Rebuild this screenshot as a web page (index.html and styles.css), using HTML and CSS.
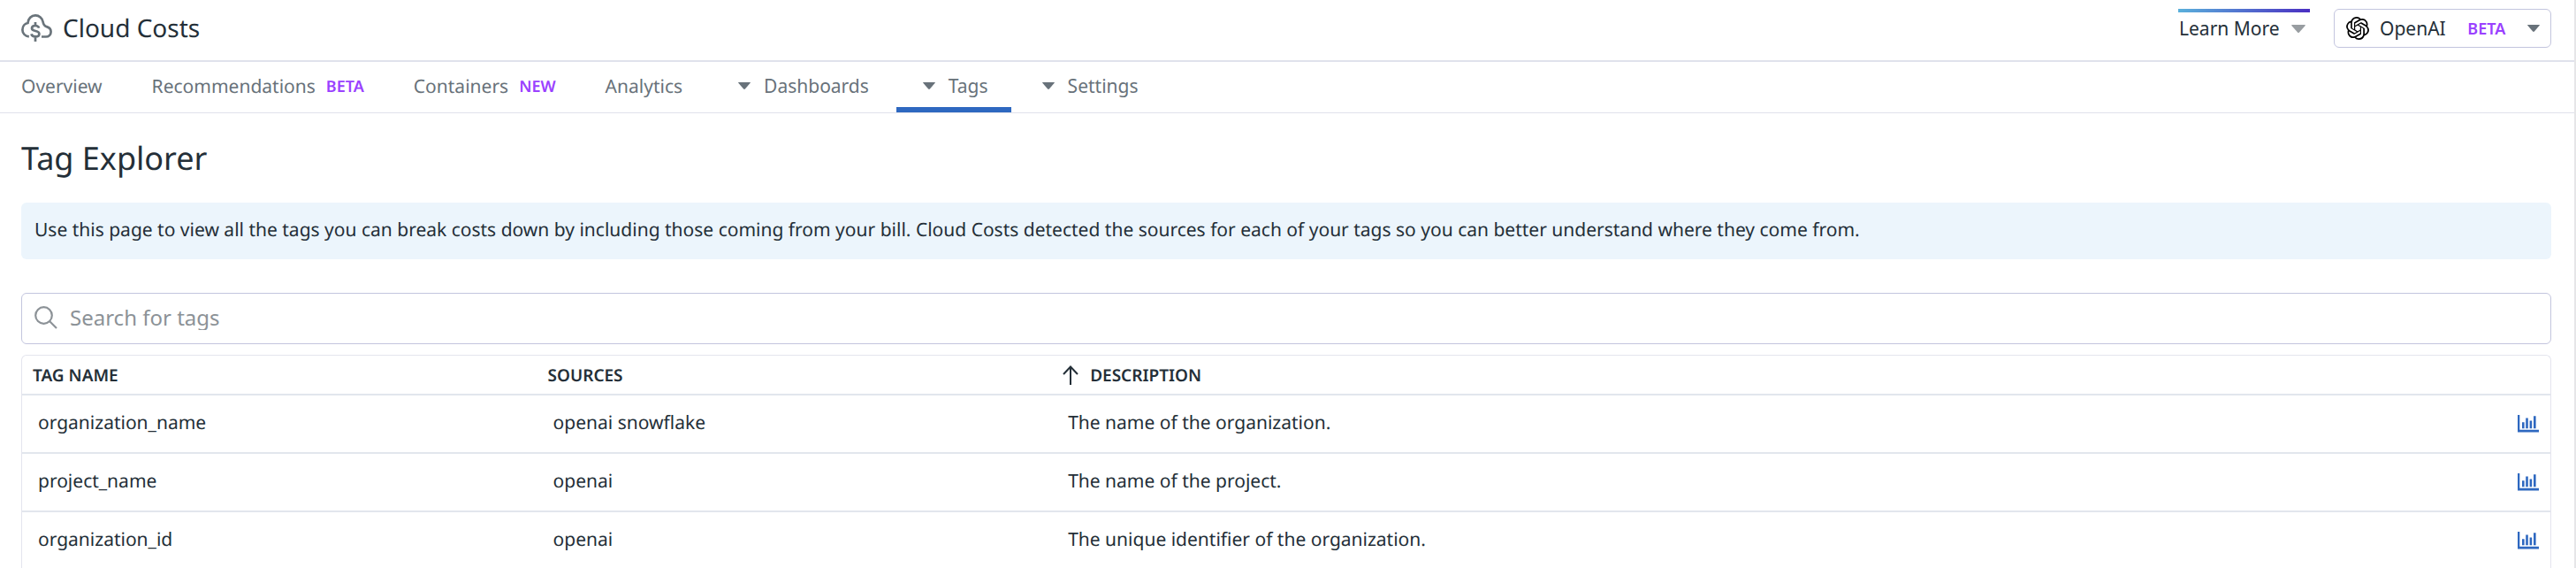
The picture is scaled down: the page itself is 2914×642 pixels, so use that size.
FILE: index.html
```html
<!DOCTYPE html>
<html lang="en">
<head>
<meta charset="utf-8">
<title>Cloud Costs - Tag Explorer</title>
<link rel="stylesheet" href="styles.css">
</head>
<body>
<svg class="sprite" aria-hidden="true">
  <symbol id="chart" viewBox="0 0 24 20">
    <path d="M0 0h2.3v16.8H24v2.7H0z"/>
    <path d="M5 8.3h2.6v6.9H5zM9.2 3.4h2.6v11.8H9.2zM13.6 6.6h2.6v8.6h-2.6zM18 1.2h2.6v14H18z"/>
  </symbol>
  <symbol id="caret" viewBox="0 0 16 9" preserveAspectRatio="none">
    <path d="M.8 0h14.4q1 0 .5.900L9 8.400q-1 1-2 0L.3.900Q-.2 0 .8 0z"/>
  </symbol>
</svg>
<div class="page">
  <header class="topbar">
    <div class="brand">
      <svg class="brand-icon" viewBox="0 0 35 31" aria-hidden="true">
        <path d="M8.800 25.400C4.500 24.800 1.400 21.700 1.400 17.700c0-3.900 2.600-7 6.100-7.700C7.900 5 11.500 1.400 16 1.400c4.300 0 7.900 3 8.600 7.200.4 2.900 1.600 5 4.600 5.800 2.700.8 4.400 3 4.400 5.600 0 3.200-2.500 5.500-5.600 5.500H23"/>
        <path d="M20.200 15.600c-.6-1.700-2.100-2.600-4.200-2.600-2.300 0-4 1.100-4 3 0 4.200 8.400 1.800 8.400 6.200 0 2-1.800 3.200-4.300 3.200-2.400 0-4.200-1-4.700-3M16 9v4.500M16 25v6"/>
      </svg>
      <span>Cloud Costs</span>
    </div>
    <div class="actions">
      <button class="learn" type="button">Learn More <svg class="caret-lg" aria-hidden="true"><use href="#caret"/></svg></button>
      <button class="provider" type="button">
        <svg class="openai" viewBox="0 0 24 24" aria-hidden="true"><path d="M22.2819 9.8211a5.9847 5.9847 0 0 0-.5157-4.9108 6.0462 6.0462 0 0 0-6.5098-2.9A6.0651 6.0651 0 0 0 4.9807 4.1818a5.9847 5.9847 0 0 0-3.9977 2.9 6.0462 6.0462 0 0 0 .7427 7.0966 5.98 5.98 0 0 0 .511 4.9107 6.051 6.051 0 0 0 6.5146 2.9001A5.9847 5.9847 0 0 0 13.2599 24a6.0557 6.0557 0 0 0 5.7718-4.2058 5.9894 5.9894 0 0 0 3.9977-2.9001 6.0557 6.0557 0 0 0-.7475-7.0729zm-9.022 12.6081a4.4755 4.4755 0 0 1-2.8764-1.0408l.1419-.0804 4.7783-2.7582a.7948.7948 0 0 0 .3927-.6813v-6.7369l2.02 1.1686a.071.071 0 0 1 .038.052v5.5826a4.504 4.504 0 0 1-4.4945 4.4944zm-9.6607-4.1254a4.4708 4.4708 0 0 1-.5346-3.0137l.142.0852 4.783 2.7582a.7712.7712 0 0 0 .7806 0l5.8428-3.3685v2.3324a.0804.0804 0 0 1-.0332.0615L9.74 19.9502a4.4992 4.4992 0 0 1-6.1408-1.6464zM2.3408 7.8956a4.485 4.485 0 0 1 2.3655-1.9728V11.6a.7664.7664 0 0 0 .3879.6765l5.8144 3.3543-2.0201 1.1685a.0757.0757 0 0 1-.071 0l-4.8303-2.7865A4.504 4.504 0 0 1 2.3408 7.872zm16.5963 3.8558L13.1038 8.364 15.1192 7.2a.0757.0757 0 0 1 .071 0l4.8303 2.7913a4.4944 4.4944 0 0 1-.6765 8.1042v-5.6772a.79.79 0 0 0-.407-.667zm2.0107-3.0231l-.142-.0852-4.7735-2.7818a.7759.7759 0 0 0-.7854 0L9.409 9.2297V6.8974a.0662.0662 0 0 1 .0284-.0615l4.8303-2.7866a4.4992 4.4992 0 0 1 6.6802 4.66zM8.3065 12.863l-2.02-1.1638a.0804.0804 0 0 1-.038-.0567V6.0742a4.4992 4.4992 0 0 1 7.3757-3.4537l-.142.0805L8.704 5.459a.7948.7948 0 0 0-.3927.6813zm1.0976-2.3654l2.602-1.4998 2.6069 1.4998v2.9994l-2.5974 1.4997-2.6067-1.4997Z"/></svg>
        <span>OpenAI</span>
        <span class="badge">BETA</span>
        <svg class="caret" aria-hidden="true"><use href="#caret"/></svg>
      </button>
    </div>
  </header>
  <nav class="tabs">
    <a class="tab" href="#overview">Overview</a>
    <a class="tab" href="#recommendations">Recommendations <span class="badge">BETA</span></a>
    <a class="tab" href="#containers">Containers <span class="badge">NEW</span></a>
    <a class="tab" href="#analytics">Analytics</a>
    <button class="tab menu" type="button"><svg class="caret" aria-hidden="true"><use href="#caret"/></svg>Dashboards</button>
    <button class="tab menu active" type="button"><svg class="caret" aria-hidden="true"><use href="#caret"/></svg>Tags</button>
    <button class="tab menu" type="button"><svg class="caret" aria-hidden="true"><use href="#caret"/></svg>Settings</button>
  </nav>
  <main class="content">
    <h1>Tag Explorer</h1>
    <p class="notice">Use this page to view all the tags you can break costs down by including those coming from your bill. Cloud Costs detected the sources for each of your tags so you can better understand where they come from.</p>
    <label class="search">
      <svg class="search-icon" viewBox="0 0 26 26" aria-hidden="true"><circle cx="10.500" cy="10.500" r="9.300"/><path d="M17 17l8 8"/></svg>
      <input type="text" placeholder="Search for tags" aria-label="Search for tags">
    </label>
    <div class="table-frame">
      <table>
        <colgroup><col class="col-name"><col class="col-sources"><col><col class="col-action"></colgroup>
        <thead>
          <tr>
            <th scope="col">TAG NAME</th>
            <th scope="col">SOURCES</th>
            <th scope="col" colspan="2"><span class="sorted"><svg class="arrow" viewBox="0 0 18 22" aria-hidden="true"><path d="M9 22V1.500M1 10L9 1.500 17 10"/></svg>DESCRIPTION</span></th>
          </tr>
        </thead>
        <tbody>
          <tr><td>organization_name</td><td>openai snowflake</td><td>The name of the organization.</td><td class="action"><a href="#organization_name" aria-label="View costs by organization_name"><svg class="chart"><use href="#chart"/></svg></a></td></tr>
          <tr><td>project_name</td><td>openai</td><td>The name of the project.</td><td class="action"><a href="#project_name" aria-label="View costs by project_name"><svg class="chart"><use href="#chart"/></svg></a></td></tr>
          <tr><td>organization_id</td><td>openai</td><td>The unique identifier of the organization.</td><td class="action"><a href="#organization_id" aria-label="View costs by organization_id"><svg class="chart"><use href="#chart"/></svg></a></td></tr>
        </tbody>
      </table>
    </div>
  </main>
</div>
</body>
</html>
```
FILE: styles.css
```css
* { box-sizing: border-box; }
body {
  margin: 0;
  background: #fff;
  color: #242f38;
  font: 21px/28px "Noto Sans", sans-serif;
  text-rendering: geometricPrecision;
}
button, input { font: inherit; color: inherit; background: none; border: 0; padding: 0; margin: 0; }
a { color: inherit; text-decoration: none; }
svg { display: block; flex: none; }
.sprite { position: absolute; width: 0; height: 0; }
.page { height: 100vh; overflow: hidden; border-right: 2px solid #e6e6e8; }

.topbar {
  display: flex;
  justify-content: space-between;
  height: 70px;
  padding: 10px 26px 0 24px;
  border-bottom: 2px solid #e0e2ec;
}
.brand { display: flex; align-items: center; gap: 12px; height: 43px; font-size: 28px; }
.brand-icon { width: 35px; height: 31px; fill: none; stroke: #6a747b; stroke-width: 2.7; }
.actions { display: flex; gap: 27px; }
.learn {
  display: flex;
  align-items: center;
  gap: 13px;
  width: 149px;
  height: 44px;
  padding: 0 0 0 1px;
  background: linear-gradient(90deg, #5ab0db, #4a2fc2) top / 100% 4px no-repeat;
}
.caret-lg { width: 16px; height: 9px; fill: #989da1; }
.caret { width: 14px; height: 8px; fill: #68727a; }
.provider {
  display: flex;
  align-items: center;
  width: 246px;
  height: 44px;
  padding: 0 12px 0 13px;
  border: 1px solid #c3c5de;
  border-radius: 6px;
}
.openai { width: 26px; height: 26px; margin-right: 12px; fill: #000; }
.provider .badge { margin: 0 auto; }
.badge { font-size: 18px; font-weight: 600; color: #9a41ff; }

.tabs {
  display: flex;
  height: 58px;
  padding-left: 24px;
  border-bottom: 1px solid #e0e2ec;
  color: #68727a;
}
.tab { display: flex; align-items: center; gap: 12px; padding: 0 28px 1px; }
.tab:first-child { padding-left: 0; }
.menu { gap: 15px; margin-left: 5px; padding: 0 26px 4px 30px; }
.active { box-shadow: inset 0 -6px #2e68c0; }

.content { padding: 27px 26px 0 24px; }
h1 { margin: 0 0 26px; font-size: 36px; line-height: 48px; font-weight: 400; }
.notice {
  margin: 0 0 38px;
  padding: 17px 15px 19px;
  background: #ecf5fc;
  border-radius: 6px;
}
.search {
  display: flex;
  align-items: center;
  gap: 14px;
  height: 58px;
  padding: 0 14px 2px;
  border: 1px solid #c3c5de;
  border-radius: 6px;
}
.search-icon { width: 26px; height: 26px; fill: none; stroke: #8c9297; stroke-width: 2.2; }
.search input { flex: 1; font-size: 24px; outline: 0; }
.search input::placeholder { color: #8c9297; opacity: 1; }

.table-frame {
  margin-top: 12px;
  border: 1px solid #e4e5ee;
  border-bottom: 0;
  border-radius: 6px 6px 0 0;
}
table { width: 100%; table-layout: fixed; border-collapse: separate; border-spacing: 0; }
.col-name, .col-sources { width: 20.37%; }
.col-action { width: 60px; }
th, td { border-bottom: 2px solid #e2e6ed; text-align: left; }
th { height: 45px; padding: 0 12px; font-size: 19px; line-height: 24px; font-weight: 600; }
td { height: 66px; padding: 0 18px 2px; }
.sorted { display: flex; align-items: center; gap: 13px; }
.arrow { width: 18px; height: 22px; fill: none; stroke: #242f38; stroke-width: 2; }
.action { padding: 0 13px; }
.action a { display: flex; justify-content: flex-end; }
.chart { width: 24px; height: 20px; fill: #2e68c0; }
```
